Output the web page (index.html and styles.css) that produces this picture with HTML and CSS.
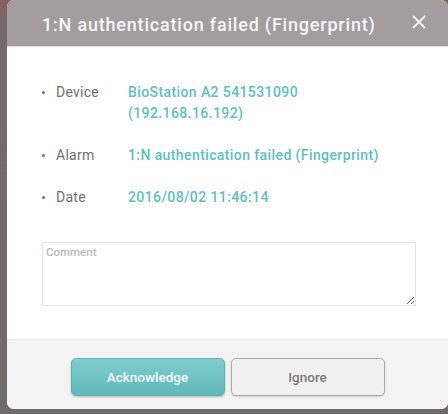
FILE: index.html
```html
<!DOCTYPE html>
<html>
<head>
<meta charset="utf-8">
<link rel="stylesheet" href="styles.css">
</head>
<body>
<div class="dialog">
  <div class="header">
    <span class="title">1:N authentication failed (Fingerprint)</span>
    <span class="close">
      <svg width="14" height="14" viewBox="0 0 14 14"><path d="M1.5 1.5 L12.5 12.5 M12.5 1.5 L1.5 12.5" stroke="#f4f4f4" stroke-width="1.8" stroke-linecap="round"/></svg>
    </span>
  </div>
  <div class="content">
    <div class="info">
      <div class="label">Device</div>
      <div class="value">BioStation A2 541531090<br>(192.168.16.192)</div>
      <div class="label">Alarm</div>
      <div class="value">1:N authentication failed (Fingerprint)</div>
      <div class="label">Date</div>
      <div class="value">2016/08/02 11:46:14</div>
    </div>
    <textarea class="comment" placeholder="Comment"></textarea>
  </div>
  <div class="footer">
    <button class="btn primary">Acknowledge</button>
    <button class="btn secondary">Ignore</button>
  </div>
</div>
</body>
</html>
```
FILE: styles.css
```css
html, body {
  margin: 0;
  padding: 0;
}
body {
  width: 448px;
  height: 414px;
  overflow: hidden;
  background: linear-gradient(180deg, #8a5f5c 0px, #766b6c 25px, #6f6a6b 100%);
  font-family: Roboto, "Liberation Sans", sans-serif;
}
.dialog {
  margin-left: 7px;
  width: 441px;
  height: 409px;
  background: #fff;
  border-radius: 7px;
  overflow: hidden;
  display: flex;
  flex-direction: column;
}
.header {
  height: 47px;
  flex: none;
  background: #a39d9f;
  display: flex;
  align-items: center;
  padding-left: 35px;
  padding-right: 22px;
  padding-top: 3px;
  box-sizing: border-box;
  border-bottom: 1px solid #d8d8d8;
}
.title {
  flex: 1;
  color: #f6f6f6;
  font-size: 18px;
  font-weight: 500;
  letter-spacing: 0.8px;
}
.close {
  display: flex;
  margin-top: -5px;
}
.content {
  flex: 1;
  padding: 35px 33px 0 35px;
}
.info {
  display: grid;
  grid-template-columns: 86px 1fr;
  row-gap: 21px;
  font-size: 14px;
  line-height: 21px;
}
.label {
  color: #6f6f6f;
  display: flex;
  align-items: center;
  align-self: start;
  height: 21px;
  letter-spacing: 0.25px;
}
.label::before {
  content: "";
  width: 3px;
  height: 3px;
  border-radius: 50%;
  background: #777;
  margin-right: 11px;
}
.value {
  color: #5dbfc1;
  font-weight: 500;
  letter-spacing: 0.4px;
}
.comment {
  display: block;
  margin-top: 34px;
  width: 374px;
  height: 64px;
  box-sizing: border-box;
  border: 1px solid #e4e4e4;
  border-radius: 0;
  padding: 2px 3px;
  font-family: Roboto, "Liberation Sans", sans-serif;
  font-size: 11.5px;
  font-weight: 500;
  resize: vertical;
}
.comment::placeholder {
  color: #b9b9b9;
}
.footer {
  flex: none;
  height: 70px;
  box-sizing: border-box;
  background: #f3f3f3;
  border-top: 1px solid #e6e6e6;
  display: flex;
  justify-content: center;
  align-items: flex-start;
  padding-top: 18px;
  gap: 6px;
}
.btn {
  width: 154px;
  height: 38px;
  border-radius: 5px;
  font-family: Roboto, "Liberation Sans", sans-serif;
  font-size: 13.5px;
  font-weight: 500;
  cursor: pointer;
}
.primary {
  background: linear-gradient(180deg, #80cdcd 0%, #62b8ba 100%);
  border: 1px solid #5fb3b5;
  color: #f4fbfb;
  box-shadow: 0 1px 2px rgba(0,0,0,0.25);
}
.secondary {
  background: #f1f1f1;
  border: 1px solid #a9a9a9;
  color: #7a7a7a;
  box-shadow: 0 1px 2px rgba(0,0,0,0.15);
}
```
